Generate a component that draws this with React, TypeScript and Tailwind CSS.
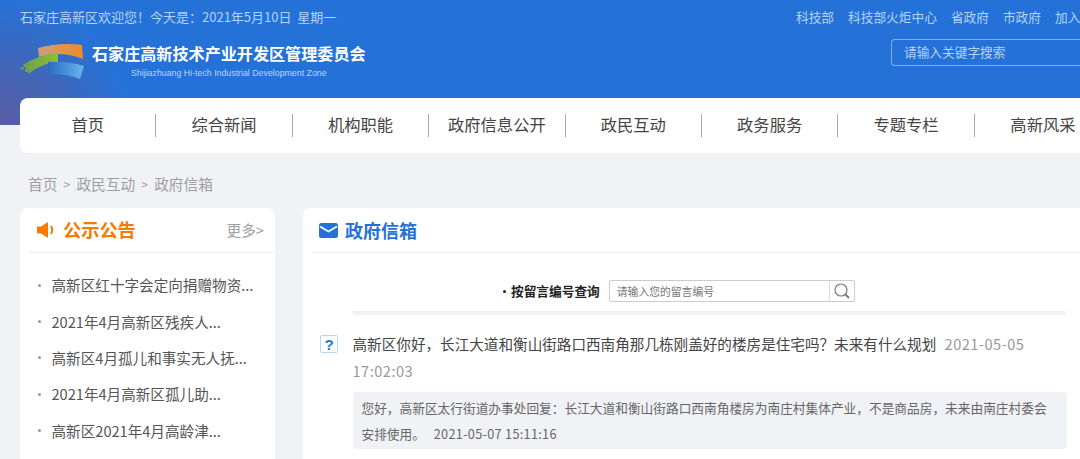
import React from "react";

const font = "font-['Noto_Sans_CJK_SC','Noto_Sans',sans-serif]";
const navItems = ["首页", "综合新闻", "机构职能", "政府信息公开", "政民互动", "政务服务", "专题专栏", "高新风采"];
const topLinks = ["科技部", "科技部火炬中心", "省政府", "市政府", "加入"];
const notices = ["高新区红十字会定向捐赠物资...", "2021年4月高新区残疾人...", "高新区4月孤儿和事实无人抚...", "2021年4月高新区孤儿助...", "高新区2021年4月高龄津..."];

function Logo() {
  return (
    <svg width="70" height="41" viewBox="0 0 70 41" className="shrink-0">
      <defs>
        <linearGradient id="o" x1="0" x2="1"><stop offset="0" stopColor="#c9a07a" /><stop offset="1" stopColor="#f08a2c" /></linearGradient>
        <linearGradient id="b" x1="0" x2="1"><stop offset="0" stopColor="#2a6bbf" /><stop offset="1" stopColor="#6ab4ee" /></linearGradient>
        <linearGradient id="g" x1="0" x2="1"><stop offset="0" stopColor="#6a9f50" /><stop offset="1" stopColor="#8fc02f" /></linearGradient>
      </defs>
      <path d="M18 9 Q40 3 62 6 L63 20 Q40 11 19 18 Z" fill="url(#o)" />
      <path d="M3 26 Q18 16 38 14 L38 23 Q22 24 10 34 Z" fill="url(#g)" />
      <path d="M28 23 Q48 22 64 27 L60 40 Q44 34 29 36 Z" fill="url(#b)" />
      <g fill="#6f9a62">
        <rect x="1" y="28" width="2.500" height="2.500" /><rect x="4" y="25" width="3" height="3" /><rect x="5" y="30" width="3" height="3" /><rect x="8" y="32" width="2.500" height="2.500" />
      </g>
    </svg>
  );
}

export default function App() {
  return (
    <div className={`w-[1080px] h-[459px] overflow-hidden bg-[#f0f2f5] ${font}`}>
      <header className="h-[125px] bg-[radial-gradient(circle_at_0px_125px,#5a5ca4_0px,#4266b8_60px,#2472d8_130px)] flex flex-col">
        <div className="h-[33px] flex items-center justify-between pl-5 text-[12.7px] text-[#b5d3f5]">
          <span className="text-[13px]">石家庄高新区欢迎您！今天是：2021年5月10日&nbsp;&nbsp;星期一</span>
          <div className="flex gap-[14px] w-[284px] shrink-0 whitespace-nowrap overflow-hidden">
            {topLinks.map((l) => <span key={l}>{l}</span>)}
          </div>
        </div>
        <div className="flex items-start justify-between">
          <div className="flex pl-5 mt-[6px]">
            <Logo />
            <div className="ml-[2px] flex flex-col items-center text-white">
              <span className="text-[16.1px] font-bold leading-[24px] mt-[2px]">石家庄高新技术产业开发区管理委员会</span>
              <span className="mt-[2px] text-[8.8px] leading-[12px] text-[#b8d4f4] font-['Liberation_Sans',sans-serif]">Shijiazhuang Hi-tech Industrial Development Zone</span>
            </div>
          </div>
          <div className="w-[189px] h-[27px] mt-[6px] border border-r-0 border-[#7fb0ea] rounded-l-[4px] flex items-center pl-[12px] pb-[2px] text-[12.7px] text-[#b5d3f5]">请输入关键字搜索</div>
        </div>
      </header>

      <nav className="-mt-[27px] ml-5 h-[55px] bg-white rounded-l-[8px] flex items-center whitespace-nowrap">
        {navItems.map((n, i) => (
          <div key={n} className={`w-[136.4px] shrink-0 h-[23px] flex items-center justify-center ${i < 7 ? "border-r border-[#aaa]" : ""}`}>
            <span className="text-[16.3px] leading-[23px] text-[#444] -mt-[3px]">{n}</span>
          </div>
        ))}
      </nav>

      <div className="h-[55px] pl-7 pt-[7px] flex items-center gap-[5px] text-[14.7px] text-[#a0a0a0] leading-[20px]">
        <span>首页</span><span className="w-[9px] text-center text-[12px]">&gt;</span><span>政民互动</span><span className="w-[9px] text-center text-[12px]">&gt;</span><span>政府信箱</span>
      </div>

      <div className="flex pl-5 gap-[28px]">
        <aside className="w-[255px] h-[300px] shrink-0 bg-white rounded-[8px] pl-[9px]">
          <div className="h-[45px] border-b border-[#eceef1] flex items-center justify-between pr-[11px]">
            <div className="flex items-center gap-[6px] pl-[8px] text-[18.2px] font-bold text-[#f57c00]">
              <svg width="20" height="18" viewBox="0 0 20 18" fill="#f57c00">
                <path d="M0 5.5h4L11 1v16L4 12.500H0z" />
                <path d="M14 5q2.500 4 0 8" fill="none" stroke="#f57c00" strokeWidth="2" />
              </svg>
              公示公告
            </div>
            <span className="text-[14.7px] text-[#a0a0a0]">更多&gt;</span>
          </div>
          <ul className="pt-[14px]">
            {notices.map((t) => (
              <li key={t} className="h-[36.4px] flex items-center text-[14.6px] text-[#555] whitespace-nowrap">
                <span className="w-[3px] h-[3px] rounded-full bg-[#999] ml-[9px] mr-[10.500px]" />
                {t}
              </li>
            ))}
          </ul>
        </aside>

        <main className="flex-1 h-[300px] bg-white rounded-l-[8px] pl-[9px]">
          <div className="h-[45px] border-b border-[#eceef1] flex items-center gap-[7px] pl-[7px] text-[18px] font-bold text-[#2472d8]">
            <svg width="19" height="15" viewBox="0 0 19 15">
              <rect width="19" height="15" rx="2.500" fill="#2472d8" />
              <path d="M1 3.500l8.500 5 8.500-5" fill="none" stroke="#fff" strokeWidth="1.600" />
            </svg>
            政府信箱
          </div>
          <div className="ml-10 w-[714px] h-[62px] flex items-center pl-[150px] pt-[18px] border-b-[4px] border-[#f0f2f5] rounded-b-[4px]">
            <span className="w-[3px] h-[3px] rounded-full bg-[#222] ml-[1px] mr-[5px]" />
            <span className="text-[12.7px] font-bold text-[#222]">按留言编号查询</span>
            <div className="ml-[9px] w-[246px] h-[22px] border border-[#ccc] rounded-[2px] flex items-center pl-[7px] text-[10.8px] text-[#777]">
              <span className="flex-1">请输入您的留言编号</span>
              <span className="w-[25px] h-[20px] border-l border-[#ddd] flex items-center justify-center">
                <svg width="18" height="18" viewBox="0 0 18 18" fill="none" stroke="#777" strokeWidth="1.200">
                  <circle cx="8" cy="8" r="6" /><path d="M12.500 12.500L16 16" strokeWidth="1.800" />
                </svg>
              </span>
            </div>
          </div>
          <div className="flex pl-[8px] pt-[15px]">
            <span className="w-[18px] h-[18px] mt-[5px] shrink-0 border border-[#b9d4f4] rounded-[2px] flex items-center justify-center text-[15px] font-bold text-[#2472d8] leading-none font-['Liberation_Sans',sans-serif]">?</span>
            <div className="ml-[14.500px] w-[714px]">
              <p className="text-[14.6px] leading-[27px] text-[#444]">
                高新区你好，长江大道和衡山街路口西南角那几栋刚盖好的楼房是住宅吗？未来有什么规划 <span className="text-[#999] ml-[5px] tracking-[0.5px]">2021-05-05 17:02:03</span>
              </p>
              <div className="mt-[8px] h-[57px] bg-[#f0f2f5] rounded-[4px] pl-[9px] pr-[14px] py-[3px] text-[12.7px] leading-[26px] text-[#666]">
                您好，高新区太行街道办事处回复：长江大道和衡山街路口西南角楼房为南庄村集体产业，不是商品房，未来由南庄村委会安排使用。 <span className="ml-[6px] tracking-[0.3px]">2021-05-07 15:11:16</span>
              </div>
            </div>
          </div>
        </main>
      </div>
    </div>
  );
}
